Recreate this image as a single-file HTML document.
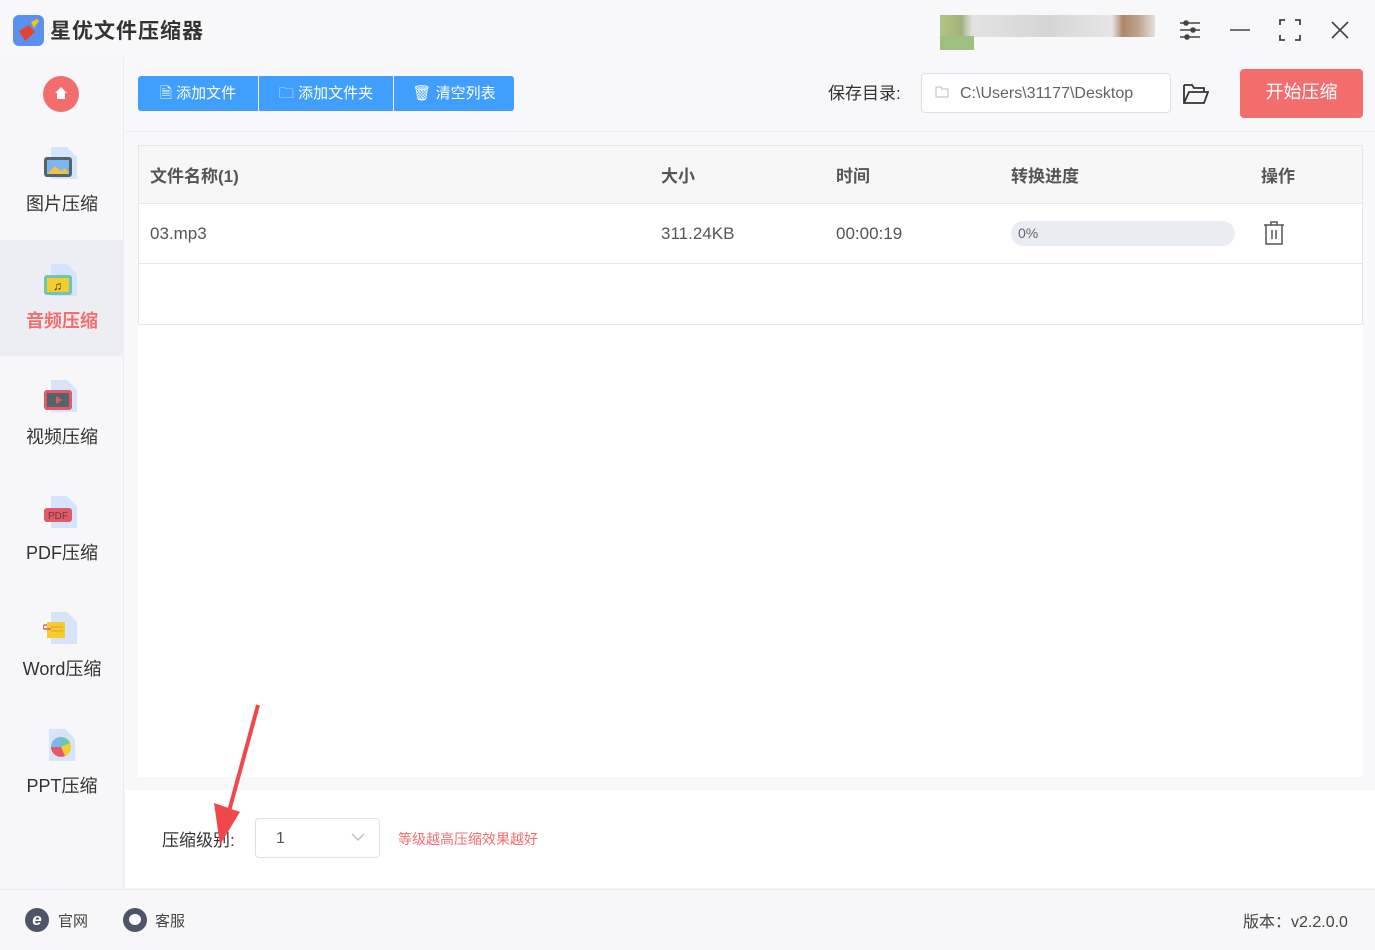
<!DOCTYPE html>
<html><head><meta charset="utf-8"><style>
*{margin:0;padding:0;box-sizing:border-box}
body{width:1375px;height:950px;background:#f8f8fa;font-family:"Liberation Sans","Noto Sans CJK SC",sans-serif;position:relative;overflow:hidden;color:#333}
.abs{position:absolute}
.side{left:0;top:57px;width:124px;height:833px;background:#f7f7f9;border-right:1px solid #e9e9ee}
.item{position:absolute;left:0;width:124px;height:116px;text-align:center;font-size:18px;color:#333}
.item .lbl{position:absolute;left:0;right:0;top:67px}
.item svg{position:absolute;left:43px;top:22px}
.sel{background:#eceef4}
.btn{top:76px;height:35px;background:#409eff;color:#fff;font-size:15px;line-height:35px;text-align:center}
</style></head><body>
<!-- title -->
<div class="abs" style="left:13px;top:15px;width:31px;height:31px;background:#5b8ff0;border-radius:6px"></div>
<svg class="abs" style="left:15px;top:17px" width="28" height="28"><path d="M16 5 L22 2 L24 4 L19 11 Z" fill="#f5c518"/><path d="M4 14 L14 8 L20 15 L10 24 Z" fill="#e2452f"/></svg>
<div class="abs" style="left:50px;top:15px;font-size:21px;font-weight:bold;color:#333;letter-spacing:1px">星优文件压缩器</div>
<div class="abs" style="left:940px;top:15px;width:215px;height:22px;background:linear-gradient(90deg,#a0b860 0,#8fa060 10%,#ddd 15%,#ccc 50%,#e2e2e2 80%,#9c6a45 85%,#b08c70 92%,#e0dad5 100%);opacity:.8"></div>
<div class="abs" style="left:940px;top:36px;width:34px;height:14px;background:#9cc080"></div>
<svg class="abs" style="left:1178px;top:18px" width="24" height="24" stroke="#444" stroke-width="1.6" fill="none"><path d="M2 5h20M2 12h20M2 19h20"/><circle cx="8" cy="5" r="2" fill="#444"/><circle cx="15" cy="12" r="2" fill="#444"/><circle cx="9" cy="19" r="2" fill="#444"/></svg>
<svg class="abs" style="left:1228px;top:18px" width="24" height="24" stroke="#444" stroke-width="1.6" fill="none"><path d="M2 12h20"/></svg>
<svg class="abs" style="left:1278px;top:18px" width="24" height="24" stroke="#444" stroke-width="1.8" fill="none"><path d="M2 7V2h5M17 2h5v5M22 17v5h-5M7 22H2v-5"/></svg>
<svg class="abs" style="left:1329px;top:19px" width="22" height="22" stroke="#444" stroke-width="1.6" fill="none"><path d="M3 3l16 16M19 3L3 19"/></svg>

<!-- sidebar -->
<div class="abs side">
<div class="abs" style="left:43px;top:19px;width:36px;height:36px;border-radius:50%;background:#f46d6d"></div>
<svg class="abs" style="left:53px;top:28px" width="16" height="16"><path d="M8 2L2 8h2v6h8V8h2z" fill="#fff"/></svg>
<div class="item" style="top:66px"><svg width="36" height="36"><path d="M8 2h16l10 10v22H8z" fill="#d6e4fb"/><rect x="1" y="12" width="28" height="20" rx="3" fill="#55636b"/><rect x="4" y="15" width="22" height="14" fill="#7cb6f2"/><path d="M4 29l8-8 6 5 4-3 4 6z" fill="#f0c048"/></svg><div class="lbl">图片压缩</div></div>
<div class="item sel" style="top:183px"><svg width="36" height="36"><path d="M8 2h16l10 10v22H8z" fill="#d6e4fb"/><rect x="1" y="13" width="28" height="20" rx="3" fill="#6dc6b4"/><rect x="4" y="16" width="22" height="14" fill="#f5cc2c"/><text x="10" y="28" font-size="12" fill="#333">♫</text></svg><div class="lbl" style="color:#f46d6d;font-weight:bold">音频压缩</div></div>
<div class="item" style="top:299px"><svg width="36" height="36"><path d="M8 2h16l10 10v22H8z" fill="#d6e4fb"/><rect x="1" y="12" width="28" height="20" rx="3" fill="#e05a67"/><rect x="4" y="15" width="22" height="14" fill="#55636b"/><path d="M13 18l6 4-6 4z" fill="#e05a67"/></svg><div class="lbl">视频压缩</div></div>
<div class="item" style="top:415px"><svg width="36" height="36"><path d="M8 2h16l10 10v22H8z" fill="#d6e4fb"/><rect x="1" y="14" width="28" height="14" rx="3" fill="#e05a67"/><text x="5" y="25" font-size="10" fill="#6a3a3f" font-family="Liberation Sans">PDF</text></svg><div class="lbl">PDF压缩</div></div>
<div class="item" style="top:531px"><svg width="36" height="36"><path d="M8 2h16l10 10v22H8z" fill="#d6e4fb"/><rect x="4" y="12" width="18" height="16" fill="#f5cc2c"/><path d="M8 17h12M8 21h12" stroke="#e3a030"/><path d="M4 15h-2a2 2 0 0 0 0 4h6" stroke="#e05a67" fill="none" stroke-width="1.5"/></svg><div class="lbl">Word压缩</div></div>
<div class="item" style="top:648px"><svg width="36" height="36"><path d="M6 2h16l10 10v22H6z" fill="#d6e4fb"/><circle cx="18" cy="20" r="10" fill="#f5cc2c"/><path d="M18 20L8 20A10 10 0 0 1 18 10z" fill="#7cb6f2"/><path d="M18 20L18 10A10 10 0 0 1 27 16z" fill="#6dc6b4"/><path d="M18 20L8 20A10 10 0 0 0 22 29z" fill="#e05a67"/></svg><div class="lbl">PPT压缩</div></div>
</div>

<!-- toolbar -->
<div class="abs btn" style="left:138px;width:120px;border-radius:3px 0 0 3px">🗎 添加文件</div>
<div class="abs btn" style="left:259px;width:134px">🗀 添加文件夹</div>
<div class="abs btn" style="left:394px;width:120px;border-radius:0 3px 3px 0">🗑 清空列表</div>
<div class="abs" style="left:828px;top:79px;font-size:17px;color:#333">保存目录:</div>
<div class="abs" style="left:921px;top:73px;width:250px;height:40px;background:#fff;border:1px solid #dcdfe6;border-radius:4px;font-size:16px;color:#606266;line-height:40px;padding-left:38px">C:\Users\31177\Desktop</div>
<svg class="abs" style="left:935px;top:86px" width="14" height="12" stroke="#bbb" fill="none"><path d="M1 1h5l1 2h6v8H1z"/></svg>
<svg class="abs" style="left:1182px;top:82px" width="28" height="24" stroke="#333" stroke-width="1.8" fill="none"><path d="M2 3h8l2 3h10v4M2 3v18h20l4-11H7L2 21"/></svg>
<div class="abs" style="left:1240px;top:69px;width:123px;height:49px;background:#f46d6d;border-radius:4px;color:#fff;font-size:18px;text-align:center;line-height:47px">开始压缩</div>
<div class="abs" style="left:125px;top:131px;width:1250px;height:1px;background:#eee"></div>

<!-- table -->
<div class="abs" style="left:138px;top:145px;width:1225px;height:632px;background:#fff"></div>
<div class="abs" style="left:138px;top:145px;width:1225px;height:180px;border:1px solid #e6e6e9"></div>
<div class="abs" style="left:139px;top:146px;width:1223px;height:58px;background:#f7f7f8;border-bottom:1px solid #e6e6e9"></div>
<div class="abs" style="left:139px;top:263px;width:1223px;height:1px;background:#e6e6e9"></div>
<div class="abs" style="top:162px;left:150px;font-size:17px;font-weight:bold;color:#555">文件名称(1)</div>
<div class="abs" style="top:162px;left:661px;font-size:17px;font-weight:bold;color:#555">大小</div>
<div class="abs" style="top:162px;left:836px;font-size:17px;font-weight:bold;color:#555">时间</div>
<div class="abs" style="top:162px;left:1011px;font-size:17px;font-weight:bold;color:#555">转换进度</div>
<div class="abs" style="top:162px;left:1261px;font-size:17px;font-weight:bold;color:#555">操作</div>
<div class="abs" style="top:224px;left:150px;font-size:17px;color:#555">03.mp3</div>
<div class="abs" style="top:224px;left:661px;font-size:17px;color:#555">311.24KB</div>
<div class="abs" style="top:224px;left:836px;font-size:17px;color:#555">00:00:19</div>
<div class="abs" style="top:221px;left:1011px;width:224px;height:25px;border-radius:13px;background:#eaecf3;font-size:14px;color:#666;line-height:25px;padding-left:7px">0%</div>
<svg class="abs" style="left:1262px;top:220px" width="24" height="26" stroke="#555" stroke-width="1.5" fill="none"><path d="M2 5h20M9 5V2h6v3M4 5v19h16V5M10 10v9M14 10v9"/></svg>

<!-- bottom -->
<div class="abs" style="left:125px;top:790px;width:1250px;height:98px;background:#fff"></div>
<div class="abs" style="left:162px;top:826px;font-size:17px;color:#333">压缩级别:</div>
<div class="abs" style="left:255px;top:818px;width:125px;height:40px;border:1px solid #dcdfe6;border-radius:4px;background:#fff;font-size:16px;color:#555;line-height:40px;padding-left:20px">1</div>
<svg class="abs" style="left:351px;top:832px" width="14" height="10" stroke="#bbb" fill="none" stroke-width="1.3"><path d="M1 2l6 6 6-6"/></svg>
<div class="abs" style="left:398px;top:829px;font-size:14px;color:#f46d6d">等级越高压缩效果越好</div>
<svg class="abs" style="left:0;top:0" width="300" height="860"><path d="M258 705 L228 815" stroke="#f0484a" stroke-width="4"/><path d="M214 803 L240 812 L220 845 Z" fill="#f0484a"/></svg>

<!-- footer -->
<div class="abs" style="left:0;top:889px;width:1375px;height:61px;background:#f7f7f9;border-top:1px solid #e9e9ee"></div>
<div class="abs" style="left:25px;top:908px;width:24px;height:24px;border-radius:50%;background:#4f5566;color:#fff;font-size:17px;font-weight:bold;text-align:center;line-height:23px;font-style:italic">e</div>
<div class="abs" style="left:58px;top:910px;font-size:15px;color:#444">官网</div>
<div class="abs" style="left:123px;top:908px;width:24px;height:24px;border-radius:50%;background:#4f5566"></div>
<div class="abs" style="left:129px;top:914px;width:12px;height:11px;border-radius:50%;background:#fff"></div>
<div class="abs" style="left:155px;top:910px;font-size:15px;color:#444">客服</div>
<div class="abs" style="left:1243px;top:908px;font-size:16px;color:#444">版本：v2.2.0.0</div>
</body></html>
